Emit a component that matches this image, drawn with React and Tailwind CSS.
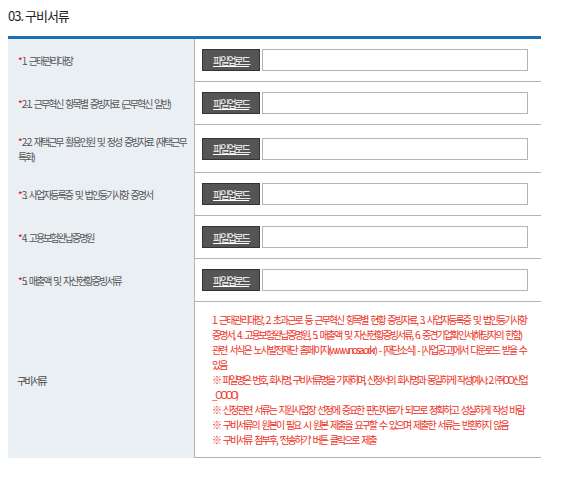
import React from 'react';

const rows = [
  { label: '1. 근태관리대장', h: 'h-[43px]' },
  { label: '2-1. 근무혁신 항목별 증빙자료 (근무혁신 일반)', h: 'h-[43px]' },
  { label: '2-2. 재택근무 활용인원 및 정성 증빙자료 (재택근무 특화)', h: 'h-[48px]' },
  { label: '3. 사업자등록증 및 법인등기사항 증명서', h: 'h-[43px]' },
  { label: '4. 고용보험완납증명원', h: 'h-[43px]' },
  { label: '5. 매출액 및 자산현황증빙서류', h: 'h-[43px]' },
];

const notes = [
  { text: '1. 근태관리대장, 2. 초과근로 등 근무혁신 항목별 현황 증빙자료, 3. 사업자등록증 및 법인등기사항 증명서, 4. 고용보험완납증명원, 5. 매출액 및 자산현황증빙서류, 6. 중견기업확인서(해당자의 한함) 관련 서식은 노사발전재단 홈페이지(www.nosa.or.kr) - [재단소식] - [사업공고]에서 다운로드 받을 수 있음', cls: 'tracking-[-2px]' },
  { text: '※ 파일명은 번호, 회사명, 구비서류명을 기재하며, 신청서의 회사명과 동일하게 작성(예시: 2. ㈜OO산업_OOOO)', cls: 'tracking-[-2.3px]' },
  { text: '※ 신청관련 서류는 지원사업장 선정에 중요한 판단자료가 되므로 정확하고 성실하게 작성 바람', cls: 'tracking-[-2px]' },
  { text: '※ 구비서류의 원본이 필요 시 원본 제출을 요구할 수 있으며 제출한 서류는 반환하지 않음', cls: 'tracking-[-2px]' },
  { text: "※ 구비서류 첨부후, '전송하기' 버튼 클릭으로 제출", cls: 'tracking-[-2px]' },
];

const FileRow = ({ label, h }) => (
  <div className={`flex ${h}`}>
    <div className="w-[186px] shrink-0 bg-[#eaeff4] flex items-center pl-[10px] pr-[4px] text-[10px] leading-[15px] tracking-[-2px] [word-spacing:2.5px] text-[#555]">
      <p className="before:content-['*'] before:text-[#e60012] before:mr-[1px]">{label}</p>
    </div>
    <div className="flex-1 border-l border-b border-[#b4b4b4] flex items-center pl-[7px] pr-[13px] gap-[2px]">
      <button className="w-[58px] h-[22px] bg-[#555] border border-[#333] text-white text-[10px] tracking-[-2px] underline shrink-0">
        파일업로드
      </button>
      <input type="text" className="flex-1 h-[22px] border border-[#b4b4b4] bg-white outline-none" />
    </div>
  </div>
);

export default function App() {
  return (
    <div className="bg-white min-h-screen px-[8px] pt-[8px] pr-[20px] font-['Noto_Sans_CJK_KR',sans-serif]">
      <h2 className="text-[13px] leading-[16px] tracking-[-1px] text-[#222] h-[28px]">03. 구비서류</h2>
      <div className="border-t-[3px] border-[#1a6fb5]">
        {rows.map((r) => (
          <FileRow key={r.label} {...r} />
        ))}
        <div className="flex">
          <div className="w-[186px] shrink-0 bg-[#eaeff4] flex items-center pl-[9px] text-[10px] tracking-[-2px] text-[#444]">
            구비서류
          </div>
          <div className="flex-1 border-l border-b border-[#b4b4b4] pl-[17px] pr-[12px] pt-[10px] pb-[10px] text-[10px] leading-[15px] [word-spacing:2.5px] text-[#ee3124] break-all">
            {notes.map((n) => (
              <p key={n.text} className={n.cls}>{n.text}</p>
            ))}
          </div>
        </div>
      </div>
    </div>
  );
}
